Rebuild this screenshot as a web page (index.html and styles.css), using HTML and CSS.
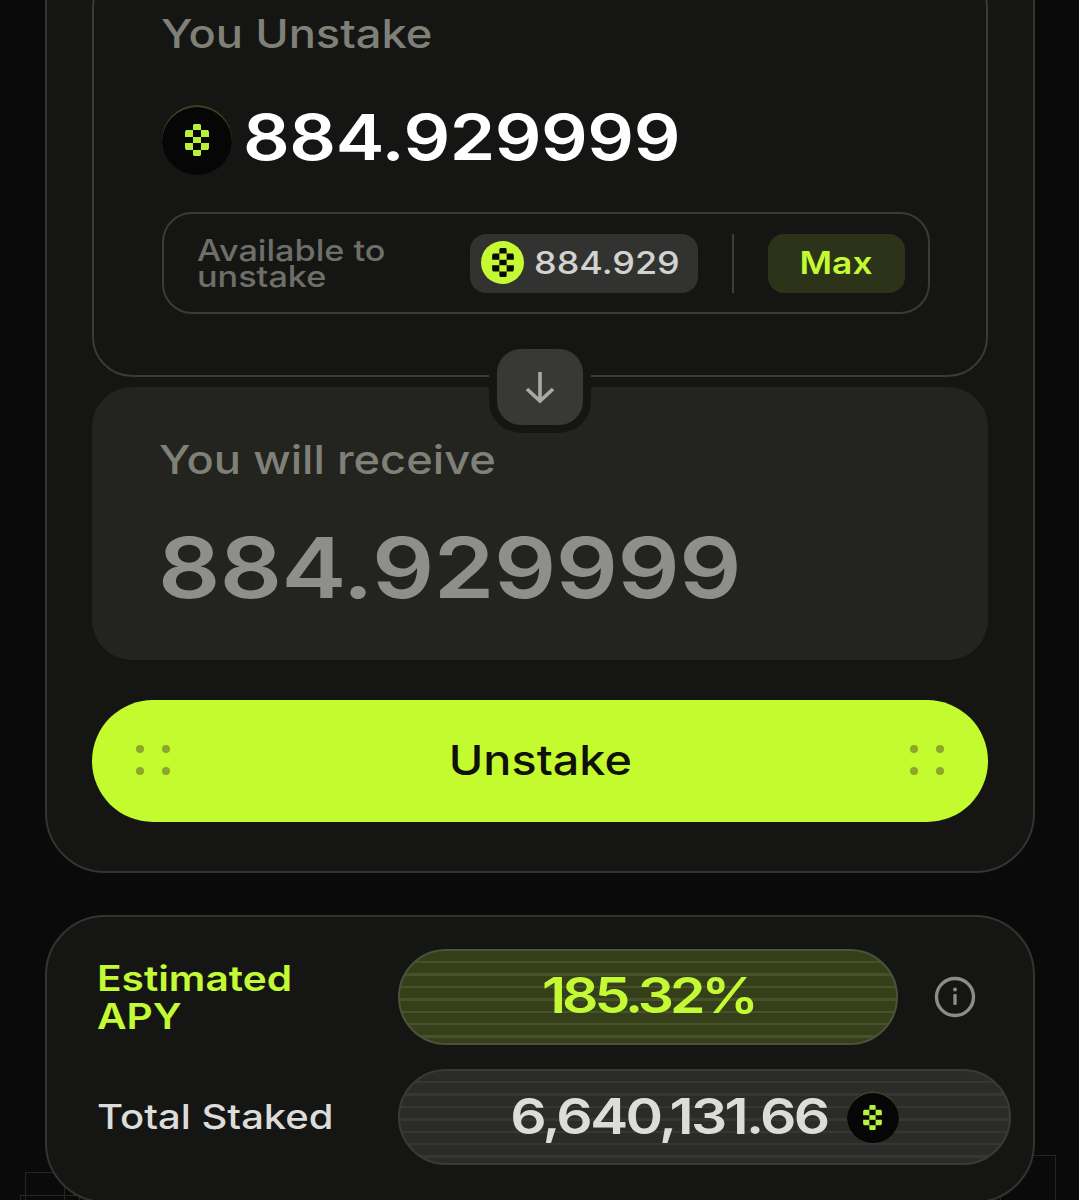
FILE: index.html
```html
<!DOCTYPE html>
<html lang="en">
<head>
  <meta charset="UTF-8" />
  <title>Unstake</title>
  <meta name="viewport" content="width=device-width, initial-scale=1.0">
  <link rel="stylesheet" href="styles.css">
</head>
<body>

<svg class="sprite" width="0" height="0">
  <symbol id="checker" viewBox="0 0 24 32">
    <path d="M9 0h6l1 1v5H8V1z"/>
    <path d="M0 8l1-2h7v7H0zM16 6h7l1 2v5h-8z"/>
    <rect x="8" y="13" width="8" height="6"/>
    <path d="M0 19h8v7H1l-1-2zM16 19h8v5l-1 2h-7z"/>
    <path d="M8 26h8v5l-1 1H9l-1-1z"/>
  </symbol>
</svg>

<div class="page">
  <div class="deco deco-left"></div>
  <div class="deco deco-left-base"></div>
  <div class="deco deco-right"></div>

  <div class="card main-card">
    <div class="unstake-card">
      <div class="label"><span class="wide">You Unstake</span></div>
      <div class="amount-row">
        <div class="token token-lg"><svg class="mark"><use href="#checker"/></svg></div>
        <span class="amount wide">884.929999</span>
      </div>
      <div class="available">
        <div class="available-text"><span class="wide">Available to<br>unstake</span></div>
        <div class="chip">
          <div class="token-solid"><svg class="mark-dark"><use href="#checker"/></svg></div>
          <span class="wide">884.929</span>
        </div>
        <div class="divider"></div>
        <div class="max"><span class="wide-c">Max</span></div>
      </div>
    </div>

    <div class="swap-btn">
      <svg width="32" height="34" viewBox="0 0 32 34" fill="none" stroke="#a9aaa5" stroke-width="3.6">
        <path d="M16 2v29M3 19l13 12 13-12"/>
      </svg>
    </div>

    <div class="receive-card">
      <div class="label"><span class="wide">You will receive</span></div>
      <div class="receive-amount"><span class="wide">884.929999</span></div>
    </div>

    <button class="unstake-btn">
      <span class="dots"><i></i><i></i><i></i><i></i></span>
      <span class="wide-c">Unstake</span>
      <span class="dots"><i></i><i></i><i></i><i></i></span>
    </button>
  </div>

  <div class="card stats-card">
    <div class="stat-row">
      <div class="stat-label apy-label"><span class="wide">Estimated<br>APY</span></div>
      <div class="pill pill-green"><span class="wide-c apy-value">185.32%</span></div>
      <svg class="info" width="42" height="42" viewBox="0 0 42 42" fill="none">
        <circle cx="21" cy="21" r="18.5" stroke="#8b8c88" stroke-width="3.4"/>
        <circle cx="21" cy="13.5" r="2" fill="#8b8c88"/>
        <rect x="19.3" y="18" width="3.4" height="11" rx="1" fill="#8b8c88"/>
      </svg>
    </div>
    <div class="stat-row">
      <div class="stat-label"><span class="wide">Total Staked</span></div>
      <div class="pill pill-grey">
        <span class="total-value">6,640,131.66</span>
        <div class="token token-sm"><svg class="mark"><use href="#checker"/></svg></div>
      </div>
    </div>
  </div>
</div>

</body>
</html>
```

FILE: styles.css
```css
* {
  box-sizing: border-box;
}
body {
  margin: 0;
  background-color: #0a0a0a;
  font-family: Inter, "Liberation Sans", sans-serif;
}
.sprite {
  display: block;
}
.page {
  position: relative;
  height: 1200px;
  overflow: hidden;
}
.wide {
  display: inline-block;
  transform: scaleX(1.16);
  transform-origin: left center;
  white-space: nowrap;
}
.wide-c {
  display: inline-block;
  transform: scaleX(1.14);
  white-space: nowrap;
}

.card {
  position: relative;
  width: 990px;
  margin-left: 45px;
  background: #151614;
  border: 2px solid #33342f;
  border-radius: 60px;
}
.main-card {
  margin-top: -62px;
  padding: 28px 45px 49px;
}
.unstake-card {
  height: 409px;
  padding: 40px 56px 0 67px;
  border: 2px solid #3a3b37;
  border-radius: 40px;
}
.label {
  height: 48px;
  font-size: 39px;
  line-height: 48px;
  font-weight: 500;
  color: #7f8078;
}
.amount-row {
  display: flex;
  align-items: center;
  gap: 11px;
  height: 70px;
  margin-top: 47px;
}
.amount {
  padding-bottom: 6px;
  font-size: 63px;
  font-weight: 600;
  letter-spacing: -0.4px;
  color: #fff;
}

.token {
  display: flex;
  align-items: center;
  justify-content: center;
  flex: none;
  background: #050605;
  border-radius: 50%;
  box-shadow: inset 0 2px 0 #3c4424;
}
.token-lg {
  width: 70px;
  height: 70px;
  margin-left: 1px;
}
.token-lg .mark {
  width: 24px;
  height: 32px;
}
.token-sm {
  width: 52px;
  height: 52px;
}
.token-sm .mark {
  width: 19px;
  height: 25px;
}
.mark {
  fill: #b9f23c;
}
.mark-dark {
  width: 22px;
  height: 29px;
  fill: #0a0b08;
}
.token-solid {
  display: flex;
  align-items: center;
  justify-content: center;
  width: 43px;
  height: 43px;
  background: #c4fa34;
  border-radius: 50%;
  flex: none;
}

.available {
  display: flex;
  align-items: center;
  width: 768px;
  height: 102px;
  margin-top: 37px;
  margin-left: 1px;
  padding-left: 33px;
  border: 2px solid #3a3b37;
  border-radius: 30px;
}
.available-text {
  width: 273px;
  font-size: 29.5px;
  line-height: 26px;
  font-weight: 500;
  color: #6e6f69;
}
.chip {
  display: flex;
  align-items: center;
  gap: 10px;
  width: 228px;
  height: 59px;
  padding-left: 11px;
  padding-bottom: 1px;
  background: #323330;
  border-radius: 16px;
  font-size: 31px;
  font-weight: 500;
  color: #d2d3d0;
}
.divider {
  width: 2px;
  height: 59px;
  margin: 0 34px;
  background: #3d3e3a;
}
.max {
  display: flex;
  align-items: center;
  justify-content: center;
  width: 137px;
  height: 59px;
  padding-bottom: 2px;
  background: #2d3319;
  border-radius: 16px;
  font-size: 31px;
  font-weight: 600;
  color: #c4fa34;
}

.swap-btn {
  position: absolute;
  left: 450px;
  top: 409px;
  display: flex;
  align-items: center;
  justify-content: center;
  width: 86px;
  height: 76px;
  background: #383936;
  border-radius: 24px;
  box-shadow: 0 0 0 8px #151614;
}

.receive-card {
  height: 273px;
  margin-top: 10px;
  padding: 49px 0 0 67px;
  background: #23241f;
  border-radius: 40px;
}
.receive-amount {
  height: 100px;
  margin-top: 34px;
  margin-left: -1px;
  font-size: 84px;
  line-height: 100px;
  font-weight: 600;
  letter-spacing: -0.5px;
  color: #8e8e8b;
}

.unstake-btn {
  display: flex;
  align-items: center;
  justify-content: space-between;
  width: 896px;
  height: 122px;
  margin-top: 40px;
  padding: 0 44px 2px;
  border: none;
  border-radius: 61px;
  background: #c4fb2f;
  font-family: inherit;
  font-size: 41px;
  font-weight: 500;
  color: #10120a;
}
.dots {
  display: grid;
  grid-template-columns: 8px 8px;
  gap: 14px 18px;
}
.dots i {
  width: 8px;
  height: 8px;
  background: #8ea62a;
  border-radius: 50%;
}

.stats-card {
  height: 288px;
  margin-top: 42px;
  padding: 32px 22px 0 51px;
}
.stat-row {
  display: flex;
  align-items: center;
  height: 96px;
  margin-bottom: 24px;
}
.stat-label {
  flex: none;
  width: 300px;
  margin-left: -1px;
  margin-right: 1px;
  padding-bottom: 2px;
  font-size: 34.5px;
  font-weight: 500;
  color: #dcdcda;
}
.apy-label {
  padding-bottom: 0;
  font-size: 35px;
  line-height: 38px;
  font-weight: 600;
  color: #c4fa34;
}
.pill {
  display: flex;
  align-items: center;
  justify-content: center;
  height: 96px;
  border-radius: 48px;
  font-size: 50px;
  font-weight: 600;
}
.pill-green {
  width: 500px;
  padding-bottom: 5px;
  color: #c4fa34;
  border: 2px solid #48533a;
  background: repeating-linear-gradient(180deg, #353f1a 0, #353f1a 10px, #46522a 10px, #46522a 12.4px);
}
.apy-value {
  letter-spacing: -3.5px;
}
.pill-grey {
  width: 613px;
  gap: 20px;
  color: #dcdcda;
  border: 2px solid #3a3b37;
  background: repeating-linear-gradient(180deg, #2b2c29 0, #2b2c29 10px, #363732 10px, #363732 12.4px);
}
.total-value {
  display: inline-block;
  width: 316px;
  margin-bottom: 3px;
  text-align: center;
  letter-spacing: -2.3px;
  transform: scaleX(1.14);
  white-space: nowrap;
}
.info {
  flex: none;
  margin-left: 36px;
}

.deco {
  position: absolute;
  border: 1px solid #252623;
}
.deco-left {
  left: 25px;
  top: 1172px;
  width: 40px;
  height: 40px;
}
.deco-left-base {
  left: 20px;
  top: 1195px;
  width: 60px;
  height: 20px;
}
.deco-right {
  left: 1000px;
  top: 1155px;
  width: 56px;
  height: 60px;
}
```
